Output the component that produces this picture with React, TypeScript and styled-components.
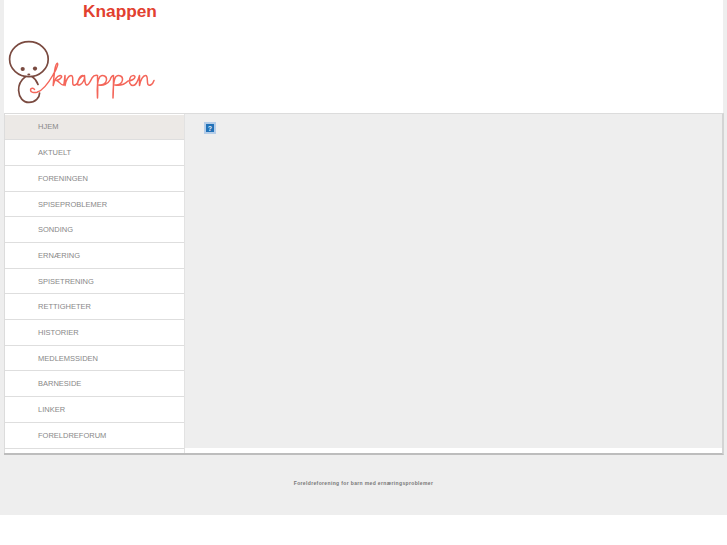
import styled, { createGlobalStyle } from 'styled-components';

const MENU = [
  'HJEM',
  'AKTUELT',
  'FORENINGEN',
  'SPISEPROBLEMER',
  'SONDING',
  'ERNÆRING',
  'SPISETRENING',
  'RETTIGHETER',
  'HISTORIER',
  'MEDLEMSSIDEN',
  'BARNESIDE',
  'LINKER',
  'FORELDREFORUM',
];

function Logo() {
  return (
    <StyledLogo viewBox="8 39 150 66" role="img" aria-label="knappen">
      <g fill="none" stroke="#7a4a40" strokeWidth="1.7" strokeLinecap="round">
        <ellipse cx="28.9" cy="59.2" rx="19.3" ry="17.5" />
        <path d="M25.5 76.6 C21 80 18.4 85 18.6 90.5 C19 97.5 23 102.4 29 102.4 C35.5 102.4 39.6 97.5 39.6 93" />
        <path d="M32 76.6 C35 78.5 37 81.5 38 84.5" />
      </g>
      <g fill="#7a4a40">
        <circle cx="22.7" cy="69" r="2.1" />
        <circle cx="35" cy="68.6" r="2.1" />
        <ellipse cx="28.8" cy="74.6" rx="1.5" ry="1" />
      </g>
      <path
        fill="none"
        stroke="#f4665a"
        strokeWidth="1.5"
        strokeLinecap="round"
        strokeLinejoin="round"
        d="M34.5 89.5 C33.5 87.5 30.5 88 30.5 90 C30.5 92.5 34 93 37 92.3 C43 90.5 49 82 53 75 C55.5 70.5 59 65 57.5 63.2 C55 63 54 75 53.2 85.5 C54.5 80 57 76 60 75.5 C63 75.5 62 79 56.5 80.5 C59.5 81 60.5 85.5 63.5 85 C64.5 84 64.5 78 65 75.5 C65 80 65 83 65 85.5 C66 80 68.5 75.5 71 75.5 C74 75.5 72 82 73 84.5 C74 86 76 85 77.5 83 C78.5 78 81 75 83 75.5 C85.5 76 84.5 79 83.5 81 C81.5 85 78 86 77.5 84 C77.5 80 81 76 84.5 75.5 C85 80 84.5 84 86.5 85 C88.5 85.5 90 82 92 78 C93.5 75.5 95 75 97.5 75.5 C97.5 82 98 90 97.5 98 C97 90 97 80 100 76.5 C103 74.5 107 76 106.5 80 C106 84 102 85.5 99 85 C103 86 108 84 110 80 C111 77 112 75.5 113.5 75.5 C113.5 82 113.5 90 113 98 C113 90 113 80 116 76.5 C119 74.5 123 76 122.5 80 C122 84 118 85.5 115 85 C120 86 124 85 128 81 C131 81 135 79 135 77 C135 75 131 75 130 78 C128.5 82 130 85.5 133 85.5 C136 85.5 138 81 139.5 75.5 C139.5 79 139.5 83 139.5 85.5 C140.5 80 143 75.5 145.5 75.5 C148.5 75.5 146.5 82 148 84.5 C149.5 86 152.5 85 154 80.5"
      />
    </StyledLogo>
  );
}

export default function App(): JSX.Element {
  return (
    <>
      <GlobalStyle />
      <StyledPage>
        <StyledHeader>
          <StyledTitle>Knappen</StyledTitle>
          <Logo />
        </StyledHeader>
        <StyledFrame>
          <StyledSidebar>
            {MENU.map((item, idx) => (
              <StyledMenuItem key={item} $active={idx === 0}>
                {item}
              </StyledMenuItem>
            ))}
          </StyledSidebar>
          <StyledMain>
            <StyledPanel>
              <StyledHelp>?</StyledHelp>
            </StyledPanel>
            <StyledStrip />
          </StyledMain>
        </StyledFrame>
        <StyledFooter>Foreldreforening for barn med ernæringsproblemer</StyledFooter>
      </StyledPage>
    </>
  );
}

const GlobalStyle = createGlobalStyle`
  html, body {
    margin: 0;
    padding: 0;
    background: #fff;
    font-family: "Liberation Sans", Arial, sans-serif;
  }
`;

const StyledPage = styled.div`
  display: flex;
  flex-direction: column;
  height: 515px;
  padding: 0 4px;
  box-sizing: border-box;
  background: #eee;
`;

const StyledHeader = styled.header`
  display: flex;
  flex-direction: column;
  height: 113px;
  padding-left: 4px;
  box-sizing: border-box;
  background: #fff;
`;

const StyledTitle = styled.h1`
  margin: 0 0 0 75px;
  height: 39px;
  font-size: 17.3px;
  line-height: 23px;
  font-weight: 700;
  color: #e2402f;
`;

const StyledLogo = styled.svg`
  display: block;
  width: 150px;
  height: 66px;
`;

const StyledFrame = styled.div`
  display: flex;
  height: 342px;
  margin-right: -1px;
  border-top: 1px solid #dcdcdc;
  border-bottom: 2px solid #bdbdbd;
  border-right: 2px solid #d4d4d4;
  box-sizing: border-box;
`;

const StyledSidebar = styled.nav`
  display: flex;
  flex-direction: column;
  width: 181px;
  flex: none;
  padding-top: 0.6px;
  box-sizing: border-box;
  background: #fff;
  border-left: 1px solid #dcdcdc;
  border-right: 1px solid #e2e2e2;
`;

const StyledMenuItem = styled.a<{ $active?: boolean }>`
  display: flex;
  align-items: center;
  flex: none;
  height: 25.7px;
  padding-left: 33px;
  box-sizing: border-box;
  border-bottom: 1px solid #dedede;
  background: ${({ $active }) => ($active ? '#ece9e6' : '#fff')};
  font-size: 7.5px;
  color: #888;
`;

const StyledMain = styled.main`
  display: flex;
  flex-direction: column;
  flex: 1;
`;

const StyledPanel = styled.div`
  flex: 1;
  padding: 8px 0 0 19px;
  background: #eee;
`;

const StyledHelp = styled.span`
  display: flex;
  align-items: center;
  justify-content: center;
  width: 12px;
  height: 12px;
  box-sizing: border-box;
  border: 2px solid #b5cde8;
  background: #2272b8;
  font-size: 7px;
  font-weight: 700;
  line-height: 1;
  color: #e8f1fa;
`;

const StyledStrip = styled.div`
  flex: none;
  height: 5px;
  background: #fff;
`;

const StyledFooter = styled.footer`
  margin-top: 24px;
  text-align: center;
  font-size: 5px;
  line-height: 8px;
  font-weight: 700;
  letter-spacing: 0.36px;
  color: #777;
`;
